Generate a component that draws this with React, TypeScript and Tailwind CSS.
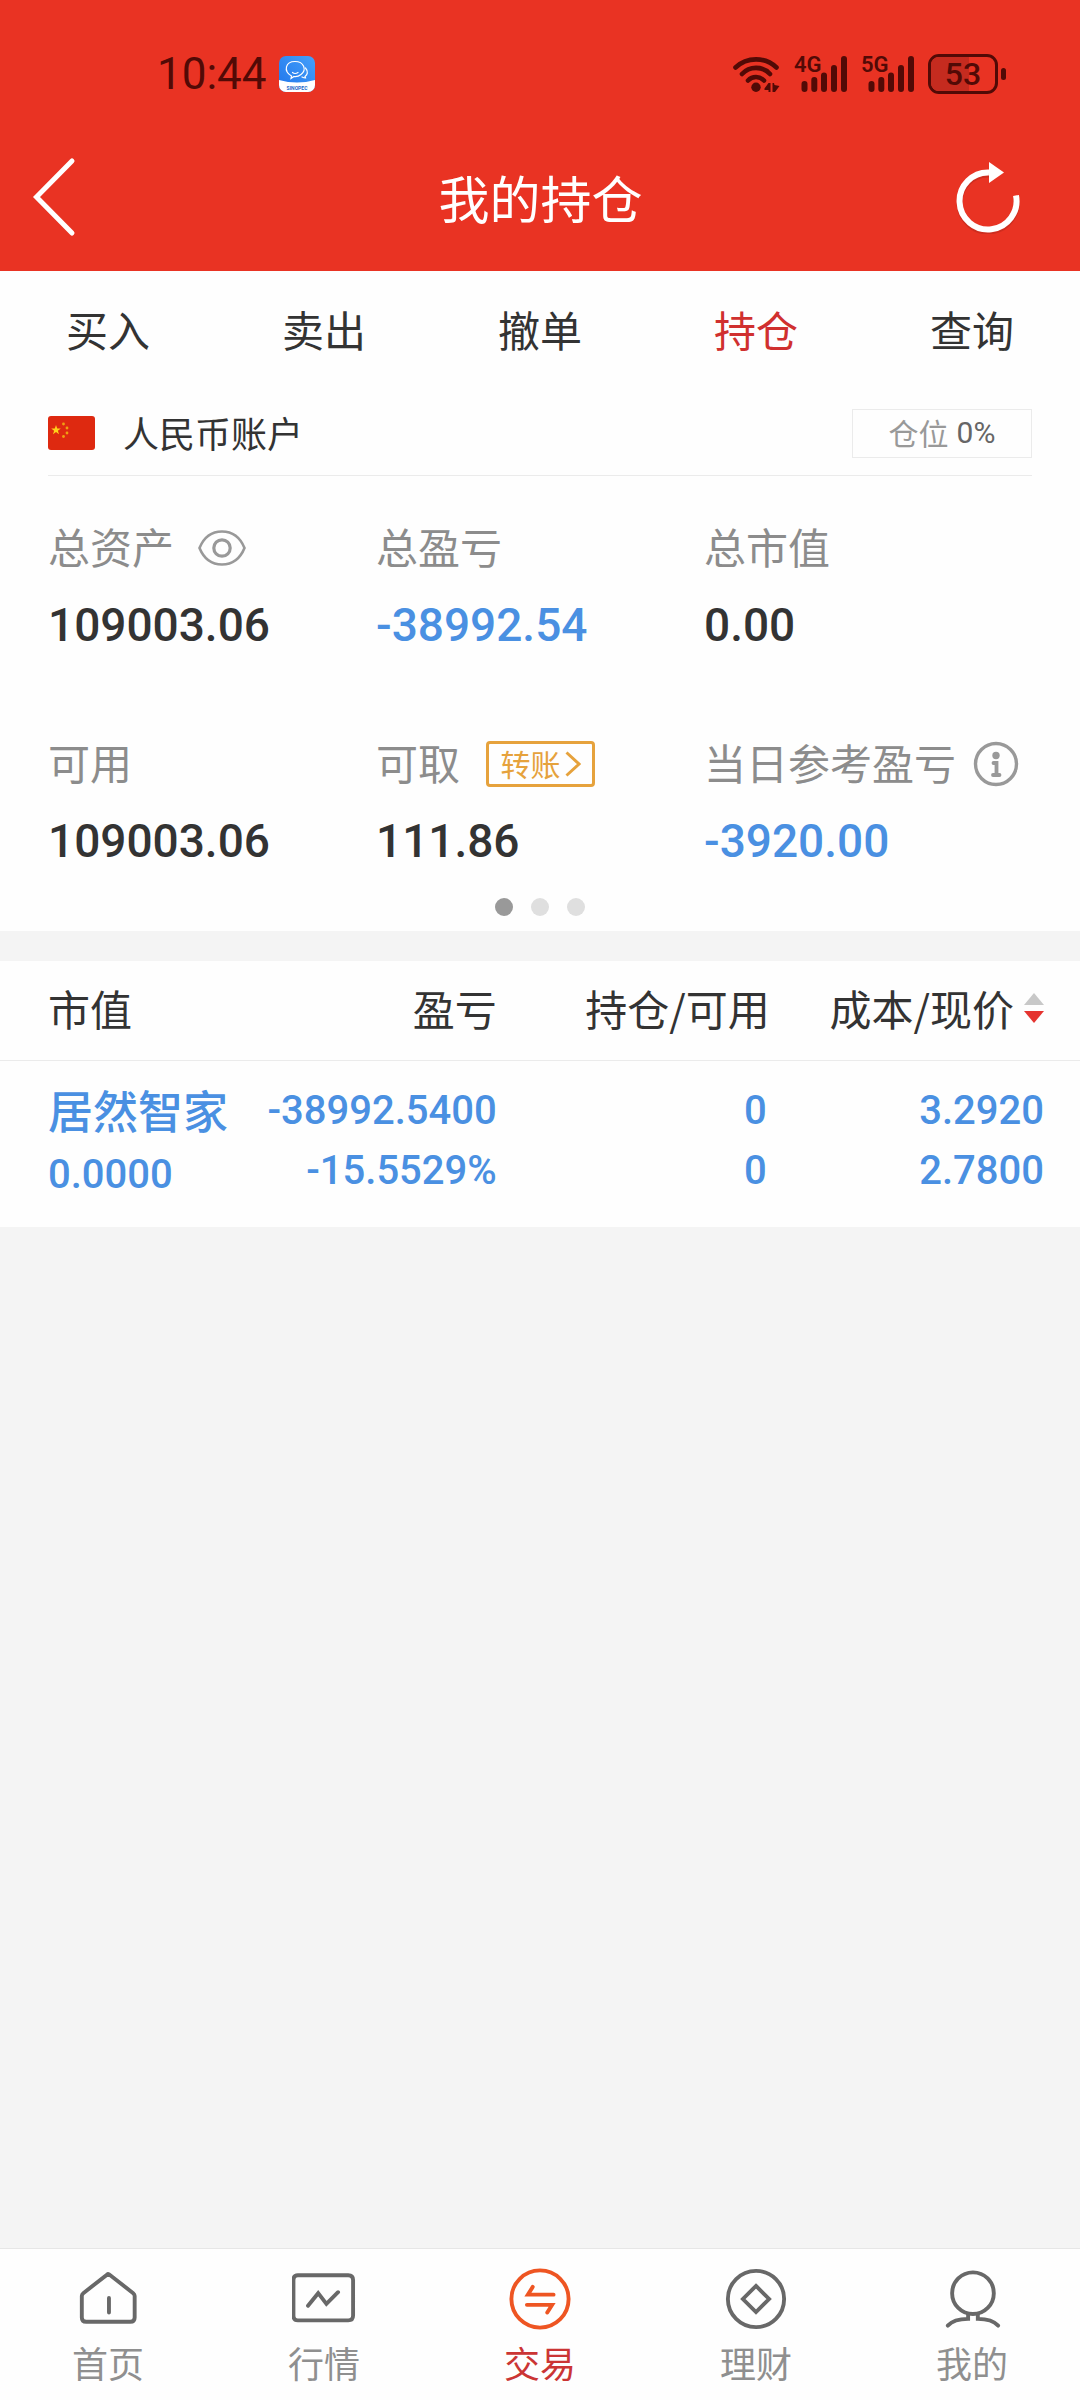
import React from "react";

const ink = "#520a06";

function AppBadge() {
  return (
    <svg className="h-9 w-9" viewBox="0 0 36 36" aria-hidden="true">
      <defs>
        <linearGradient id="badge" x1="0" y1="1" x2="1" y2="0">
          <stop offset="0" stopColor="#1f74ea" />
          <stop offset="1" stopColor="#45a0fb" />
        </linearGradient>
        <clipPath id="badgeClip">
          <rect width="36" height="36" rx="7" />
        </clipPath>
      </defs>
      <g clipPath="url(#badgeClip)">
        <rect width="36" height="36" fill="url(#badge)" />
        <path d="M0 24 Q18 29 36 24 V36 H0Z" fill="#fff" />
      </g>
      <g fill="none" stroke="#fff" strokeWidth="1.2" strokeLinecap="round">
        <path d="M12 22.500 L12.500 20 C4 15 6.500 5.500 16 5.500 C25 5.500 28 14 22 18.500 C19.500 20.500 17 20.800 15 20.500Z" />
        <path d="M26.500 12 C30 16 28 19 26 20.500 L26.500 22 C25 22 24 21.500 23 21" />
        <path d="M13.500 16.500 Q16 18.500 19 16.500" />
      </g>
      <text x="18" y="33.500" textAnchor="middle" fontSize="5" fontWeight="700" fontFamily="Roboto, sans-serif" fill="#1a66c8">
        SINOPEC
      </text>
    </svg>
  );
}

function Wifi() {
  return (
    <svg className="h-9 w-[47px]" viewBox="0 0 47 36" aria-label="Wi-Fi">
      <g fill="none" stroke={ink} strokeWidth="4.600" strokeLinecap="round">
        <path d="M2.500 11.500 A30 30 0 0 1 43.500 11.500" />
        <path d="M9 18 A19 19 0 0 1 37 18" />
        <path d="M15 24.500 A11 11 0 0 1 31 24.500" />
      </g>
      <circle cx="23" cy="31.300" r="4.700" fill={ink} />
      <path d="M31.500 32.500 L35.500 27 H37.500 V36 H35.500 V34 H31.500Z M39.500 27 H41 L41.500 29 L46.500 30 L42 36 H39.500Z" fill={ink} />
    </svg>
  );
}

function Signal({ label }: { label: string }) {
  return (
    <div className="relative h-9 w-[53px]">
      <svg className="h-9 w-[53px]" viewBox="0 0 53 36" aria-hidden="true">
        <g stroke={ink} strokeWidth="6" strokeLinecap="round">
          <path d="M10.500 28 V33 M20.300 24 V33 M30 19.500 V33 M40 12 V33 M50 3 V33" />
        </g>
      </svg>
      <span className="absolute -top-1 left-0 text-[22px] leading-[26px] font-semibold">{label}</span>
    </div>
  );
}

function Battery() {
  return (
    <div className="flex items-center gap-[3px]">
      <div className="relative flex h-10 w-[70px] items-center justify-center overflow-hidden rounded-[11px] border-3 border-[#520a06]">
        <div className="absolute inset-y-0 left-0 w-[60%] bg-[#c52b1f]" />
        <span className="relative text-[32px] leading-8 font-medium">53</span>
      </div>
      <div className="h-3 w-[5px] rounded-full bg-[#520a06]" />
    </div>
  );
}

function Flag() {
  const stars = [
    [15.5, 8],
    [19, 12],
    [19, 17],
    [15.5, 20.5],
  ];
  return (
    <svg className="h-[34px] w-[47px]" viewBox="0 0 47 34" aria-hidden="true">
      <rect width="47" height="34" rx="3" fill="#de2910" />
      <path d="M8 9 l1.200 3.500 h3.600 l-2.900 2.200 1.100 3.500 -3 -2.100 -3 2.100 1.100 -3.500 -2.900 -2.200 h3.600Z" fill="#ffd21a" />
      {stars.map(([x, y]) => (
        <circle key={`${x}-${y}`} cx={x} cy={y} r="1.400" fill="#f0a012" />
      ))}
    </svg>
  );
}

const tabs = ["买入", "卖出", "撤单", "持仓", "查询"];

type Metric = { label: string; value: string; loss?: boolean; extra?: React.ReactNode };

const metrics: Metric[] = [
  {
    label: "总资产",
    value: "109003.06",
    extra: (
      <button aria-label="显示或隐藏金额" className="ml-6">
        <svg className="h-9 w-12" viewBox="0 0 48 36" fill="none" stroke="#999" strokeWidth="2.600">
          <path d="M1.500 18 C6 7 14 1.500 24 1.500 S42 7 46.500 18 C42 29 34 34.500 24 34.500 S6 29 1.500 18Z" />
          <circle cx="24" cy="18" r="8.200" strokeWidth="3.200" />
        </svg>
      </button>
    ),
  },
  { label: "总盈亏", value: "-38992.54", loss: true },
  { label: "总市值", value: "0.00" },
  { label: "可用", value: "109003.06" },
  {
    label: "可取",
    value: "111.86",
    extra: (
      <button className="ml-[26px] flex h-[46px] w-[109px] items-center justify-center gap-1 rounded-[4px] border-3 border-[#e6a23c] text-[30px] leading-10 text-[#e6a23c]">
        <span className="pb-[2px]">转账</span>
        <svg className="h-[26px] w-4" viewBox="0 0 16 26" fill="none" stroke="#e6a23c" strokeWidth="3">
          <path d="M1.500 1.500 L14 13 L1.500 24.500" />
        </svg>
      </button>
    ),
  },
  {
    label: "当日参考盈亏",
    value: "-3920.00",
    loss: true,
    extra: (
      <button aria-label="说明" className="ml-[17px]">
        <svg className="h-[46px] w-[46px]" viewBox="0 0 46 46" fill="none" stroke="#999">
          <circle cx="23" cy="23" r="20.500" strokeWidth="3.400" />
          <circle cx="23" cy="14.500" r="3.700" fill="#999" stroke="none" />
          <path d="M20.500 22 H23.500 V33.500 M20 34 H26.500" strokeWidth="3.800" strokeLinecap="round" />
        </svg>
      </button>
    ),
  },
];

const navItems = [
  {
    label: "首页",
    icon: (
      <path d="M32.500 6.500 Q33 5.800 34 6.500 L59 26 Q60.500 27.200 60.500 29 V51 Q60.500 55.500 56 55.500 H10.500 Q6 55.500 6 51 V29 Q6 27.200 7.500 26Z M34 31 V46" />
    ),
  },
  {
    label: "行情",
    icon: (
      <path d="M6 7.500 H58 Q63 7.500 63 12.500 V49 Q63 54 58 54 H6 Q1.500 54 1.500 49 V12.500 Q1.500 7.500 6 7.500Z M16.500 39 L27 26 L35.500 37 L47.500 25" />
    ),
  },
  {
    label: "交易",
    active: true,
    icon: (
      <>
        <circle cx="33" cy="32" r="29.500" />
        <path d="M25.500 19.500 L20.500 27.500 H47 M19.500 38 H45.500 L40.500 46" />
      </>
    ),
  },
  {
    label: "理财",
    icon: (
      <>
        <circle cx="33" cy="32" r="29" />
        <path d="M33 18.500 L46.500 32 L33 45.500 L19.500 32Z" />
      </>
    ),
  },
  {
    label: "我的",
    icon: (
      <>
        <circle cx="34" cy="26" r="21.500" />
        <path d="M29 47.500 V52.500 C19 52.500 12.500 54.500 8 59.500 M39 47.500 V52.500 C49 52.500 55.500 54.500 60 59.500" />
      </>
    ),
  },
];

export default function App() {
  return (
    <div className="flex min-h-screen flex-col bg-[#f4f4f4] font-['Noto_Sans_CJK_SC',sans-serif] text-[#333]">
      <header className="bg-[#e93323]">
        <div className="flex h-[126px] items-center justify-between pt-[22px] pr-[74px] pl-[157px] font-['Roboto',sans-serif] text-[#520a06]">
          <div className="flex items-center gap-3">
            <span className="text-[44px] leading-[50px]">10:44</span>
            <AppBadge />
          </div>
          <div className="flex items-center gap-[14px]">
            <Wifi />
            <Signal label="4G" />
            <Signal label="5G" />
            <Battery />
          </div>
        </div>
        <div className="grid h-[145px] grid-cols-[1fr_auto_1fr] items-center pr-[59px] pb-1 pl-8 text-white">
          <button aria-label="返回" className="justify-self-start">
            <svg className="h-20 w-11" viewBox="0 0 44 80" fill="none" stroke="currentColor" strokeWidth="5" strokeLinecap="round">
              <path d="M40 4 L4.500 40 L40 76" />
            </svg>
          </button>
          <h1 className="pl-7 text-[51px] leading-[60px]">我的持仓</h1>
          <button aria-label="刷新" className="justify-self-end">
            <svg className="h-[74px] w-[66px]" viewBox="0 0 66 74" fill="none">
              <path d="M34 14.500 A28.500 28.500 0 1 0 61 37.500" stroke="#b3271b" strokeWidth="6" opacity="0.500" />
              <path d="M34 12.500 A28.500 28.500 0 1 0 61 35.500" stroke="currentColor" strokeWidth="6" />
              <path d="M34 2 L49 12.500 L34 23Z" fill="currentColor" />
            </svg>
          </button>
        </div>
      </header>

      <nav className="flex h-[120px] bg-[#fefefe]">
        {tabs.map((tab) => (
          <button key={tab} className={`flex-1 pb-1 text-[42px] leading-[60px] ${tab === "持仓" ? "text-[#d0302f]" : ""}`}>
            {tab}
          </button>
        ))}
      </nav>

      <section className="bg-[#fefefe] px-12">
        <div className="flex h-[85px] items-center border-b border-[#ebebeb]">
          <Flag />
          <span className="ml-7 pb-[3px] text-[36px] leading-[48px]">人民币账户</span>
          <div className="ml-auto flex h-[49px] w-[180px] items-center justify-center gap-2 border border-[#ebebeb] text-[30px] leading-[42px] text-[#999]">
            <span className="pb-[2px]">仓位</span>
            <span className="font-['Roboto',sans-serif] text-[#666]">0%</span>
          </div>
        </div>
        <dl className="grid grid-cols-3 gap-y-[62px] pt-[42px]">
          {metrics.map((m) => (
            <div key={m.label} className="whitespace-nowrap">
              <dt className="flex h-[60px] items-center text-[42px] leading-[56px] text-[#8c8c8c]">
                <span className="pb-1">{m.label}</span>
                {m.extra}
              </dt>
              <dd
                className={`mt-[30px] h-[64px] font-['Roboto',sans-serif] text-[46px] leading-[34px] font-medium ${
                  m.loss ? "text-[#4a90e2]" : ""
                }`}
              >
                {m.value}
              </dd>
            </div>
          ))}
        </dl>
        <div className="flex justify-center gap-[18px] pt-[10px] pb-[15px]">
          <span className="size-[18px] rounded-full bg-[#999]" />
          <span className="size-[18px] rounded-full bg-[#dfdfdf]" />
          <span className="size-[18px] rounded-full bg-[#dfdfdf]" />
        </div>
      </section>

      <table className="mt-[30px] w-full table-fixed bg-[#fefefe] text-right whitespace-nowrap">
        <thead className="text-[42px] leading-[60px]">
          <tr className="h-[99px] border-b border-[#ebebeb]">
            <th className="w-[22%] pb-1 pl-12 text-left font-normal">市值</th>
            <th className="w-[24%] pb-1 font-normal">盈亏</th>
            <th className="w-[25%] pb-1 font-normal">
              <span className="-mr-[3px]">持仓/可用</span>
            </th>
            <th className="pr-9 pb-1 font-normal">
              <button className="inline-flex items-center gap-[10px]">
                成本/现价
                <svg className="h-[30px] w-5" viewBox="0 0 20 30" aria-hidden="true">
                  <path d="M10 0 L20 12 H0Z" fill="#c8c8c8" />
                  <path d="M10 30 L20 18 H0Z" fill="#e53430" />
                </svg>
              </button>
            </th>
          </tr>
        </thead>
        <tbody className="font-['Roboto',sans-serif] text-[40px] leading-[60px] font-medium text-[#4a90e2]">
          <tr className="align-top">
            <td className="pt-[18px] pb-5 pl-12 text-left leading-[64px]">
              <div className="h-[64px] font-['Noto_Sans_CJK_SC',sans-serif] text-[45px] leading-[62px]">居然智家</div>
              <div>0.0000</div>
            </td>
            <td className="pt-5">
              <div>-38992.5400</div>
              <div>-15.5529%</div>
            </td>
            <td className="pt-5">
              <div>0</div>
              <div>0</div>
            </td>
            <td className="pt-5 pr-9">
              <div>3.2920</div>
              <div>2.7800</div>
            </td>
          </tr>
        </tbody>
      </table>

      <nav className="mt-auto flex border-t border-[#e6e6e6] bg-[#fefefe] pt-[18px] pb-3">
        {navItems.map((item) => (
          <a
            key={item.label}
            href="#"
            className={`flex flex-1 flex-col items-center gap-[5px] text-[36px] leading-[52px] ${
              item.active ? "text-[#cb3534]" : "text-[#8f8f8f]"
            }`}
          >
            <svg
              className={`size-16 ${item.active ? "text-[#ee5522]" : "text-[#686868]"}`}
              viewBox="0 0 66 64"
              fill="none"
              stroke="currentColor"
              strokeWidth="4"
              strokeLinecap="round"
              aria-hidden="true"
            >
              {item.icon}
            </svg>
            {item.label}
          </a>
        ))}
      </nav>
    </div>
  );
}
